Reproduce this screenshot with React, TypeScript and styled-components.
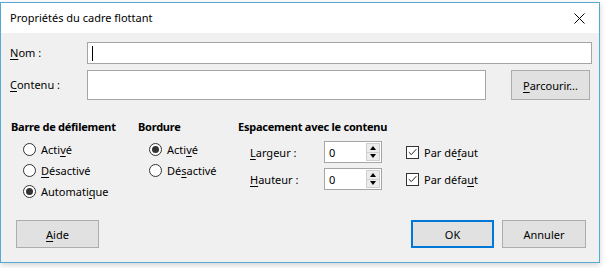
import React from "react";
import styled, { createGlobalStyle } from "styled-components";

const GlobalStyle = createGlobalStyle`
  html, body { margin: 0; padding: 0; background: #ffffff; }
  body {
    font-family: "Noto Sans", "Open Sans", sans-serif;
    font-size: 11px;
    color: #000;
  }
  * { box-sizing: border-box; }
`;

const Page = styled.div`
  padding-top: 2px;
  width: 610px;
  height: 268px;
`;

const Window = styled.div`
  width: 600px;
  height: 261px;
  border: 1px solid #55a9d2;
  display: flex;
  flex-direction: column;
  background: #f0f0f0;
  box-shadow: 0 2px 6px rgba(0, 0, 0, 0.18);
`;

const TitleBar = styled.div`
  height: 30px;
  flex: none;
  background: #ffffff;
  display: flex;
  align-items: center;
  justify-content: space-between;
  padding: 0 9px 0 9px;
`;

const Title = styled.span`
  font-size: 11px;
  line-height: 16px;
`;

const CloseIcon = styled.svg`
  width: 11px;
  height: 11px;
  margin-right: 5px;
  display: block;
`;

const Body = styled.div`
  flex: 1;
  display: flex;
  flex-direction: column;
  padding: 9px 7px 14px 9px;
`;

const FieldRow = styled.div<{ $h: number; $mt?: number }>`
  display: flex;
  align-items: center;
  height: ${(p) => p.$h}px;
  margin-top: ${(p) => p.$mt ?? 0}px;
`;

const FieldLabel = styled.label`
  width: 77px;
  flex: none;
  line-height: 16px;
`;

const TextBox = styled.div<{ $w?: number }>`
  height: 100%;
  width: ${(p) => (p.$w ? `${p.$w}px` : "auto")};
  flex: ${(p) => (p.$w ? "none" : "1")};
  background: #fff;
  border: 1px solid #a5a5a5;
  display: flex;
  align-items: center;
  padding-left: 4px;
`;

const Caret = styled.span`
  width: 1px;
  height: 15px;
  background: #000;
`;

const Mn = styled.span`
  text-decoration: underline;
  text-underline-offset: 2px;
`;

const Button = styled.button<{ $w: number; $h: number; $default?: boolean }>`
  width: ${(p) => p.$w}px;
  height: ${(p) => p.$h}px;
  flex: none;
  font-family: inherit;
  font-size: 11px;
  color: #000;
  background: #e1e1e1;
  border: ${(p) => (p.$default ? "2px solid #0078d7" : "1px solid #adadad")};
  padding: 0;
  margin: 0;
  display: flex;
  align-items: center;
  justify-content: center;
`;

const Groups = styled.div`
  display: flex;
  margin-top: 19px;
  padding-left: 1px;
`;

const Group = styled.div<{ $w: number }>`
  width: ${(p) => p.$w}px;
  flex: none;
  display: flex;
  flex-direction: column;
`;

const GroupTitle = styled.div`
  font-weight: 700;
  letter-spacing: -0.25px;
  line-height: 16px;
  height: 16px;
`;

const RadioList = styled.div<{ $indent: number }>`
  display: flex;
  flex-direction: column;
  padding-left: ${(p) => p.$indent}px;
  margin-top: 4px;
`;

const RadioRow = styled.div`
  display: flex;
  align-items: center;
  height: 21px;
  gap: 5px;
`;

const RadioCircle = styled.span<{ $on?: boolean }>`
  width: 13px;
  height: 13px;
  border-radius: 50%;
  border: 1px solid #333;
  background: #fff;
  display: flex;
  align-items: center;
  justify-content: center;
  &::after {
    content: "";
    width: 7px;
    height: 7px;
    border-radius: 50%;
    background: ${(p) => (p.$on ? "#333" : "transparent")};
  }
`;

const SpacingRows = styled.div`
  display: flex;
  flex-direction: column;
  gap: 5px;
  margin-top: 6px;
  padding-left: 12px;
`;

const SpacingRow = styled.div`
  display: flex;
  align-items: center;
  height: 22px;
`;

const SpacingLabel = styled.span`
  width: 74px;
  flex: none;
`;

const SpinBox = styled.div`
  width: 58px;
  height: 22px;
  flex: none;
  background: #fff;
  border: 1px solid #a5a5a5;
  display: flex;
  align-items: stretch;
  padding: 1px 1px 1px 4px;
`;

const SpinValue = styled.span`
  flex: 1;
  display: flex;
  align-items: center;
`;

const SpinButtons = styled.div`
  width: 14px;
  display: flex;
  flex-direction: column;
  border: 1px solid #cfcfcf;
  background: #ececec;
`;

const SpinBtn = styled.div<{ $down?: boolean }>`
  flex: 1;
  display: flex;
  align-items: center;
  justify-content: center;
  border-top: ${(p) => (p.$down ? "1px solid #cfcfcf" : "none")};
  &::after {
    content: "";
    width: 0;
    height: 0;
    border-left: 3px solid transparent;
    border-right: 3px solid transparent;
    ${(p) =>
      p.$down ? "border-top: 4px solid #000;" : "border-bottom: 4px solid #000;"}
  }
`;

const CheckRow = styled.div`
  display: flex;
  align-items: center;
  gap: 5px;
  margin-left: 24px;
`;

const CheckBox = styled.span`
  width: 13px;
  height: 13px;
  border: 1px solid #333;
  background: #fff;
  display: flex;
  align-items: center;
  justify-content: center;
`;

const ButtonBar = styled.div`
  margin-top: auto;
  display: flex;
  align-items: center;
  padding-left: 6px;
  padding-right: 6px;
  gap: 8px;
`;

const Spacer = styled.div`
  flex: 1;
`;

const Radio = ({ on, children }: { on?: boolean; children: React.ReactNode }) => (
  <RadioRow>
    <RadioCircle $on={on} />
    <span>{children}</span>
  </RadioRow>
);

const Check = () => (
  <CheckBox>
    <svg width="9" height="8" viewBox="0 0 9 8">
      <path d="M0.8 4.2 L3.3 6.6 L8.3 1.2" fill="none" stroke="#222" strokeWidth="1" />
    </svg>
  </CheckBox>
);

const Spin = () => (
  <SpinBox>
    <SpinValue>0</SpinValue>
    <SpinButtons>
      <SpinBtn />
      <SpinBtn $down />
    </SpinButtons>
  </SpinBox>
);

export default function App() {
  return (
    <Page>
      <GlobalStyle />
      <Window>
        <TitleBar>
          <Title>Propriétés du cadre flottant</Title>
          <CloseIcon viewBox="0 0 11 11">
            <path d="M0.5 0.5 L10.5 10.5 M10.5 0.5 L0.5 10.5" stroke="#000" strokeWidth="1" fill="none" />
          </CloseIcon>
        </TitleBar>
        <Body>
          <FieldRow $h={22}>
            <FieldLabel>
              <Mn>N</Mn>om :
            </FieldLabel>
            <TextBox>
              <Caret />
            </TextBox>
          </FieldRow>
          <FieldRow $h={30} $mt={6}>
            <FieldLabel>
              <Mn>C</Mn>ontenu :
            </FieldLabel>
            <TextBox $w={399} />
            <Spacer />
            <Button $w={79} $h={30} style={{ marginRight: 2 }}>
              <span>
                <Mn>P</Mn>arcourir...
              </span>
            </Button>
          </FieldRow>
          <Groups>
            <Group $w={127}>
              <GroupTitle>Barre de défilement</GroupTitle>
              <RadioList $indent={12}>
                <Radio>
                  Acti<Mn>v</Mn>é
                </Radio>
                <Radio>
                  <Mn>D</Mn>ésactivé
                </Radio>
                <Radio on>
                  Automati<Mn>q</Mn>ue
                </Radio>
              </RadioList>
            </Group>
            <Group $w={100}>
              <GroupTitle>Bordure</GroupTitle>
              <RadioList $indent={11}>
                <Radio on>
                  Acti<Mn>v</Mn>é
                </Radio>
                <Radio>
                  Dé<Mn>s</Mn>activé
                </Radio>
              </RadioList>
            </Group>
            <Group $w={300}>
              <GroupTitle>Espacement avec le contenu</GroupTitle>
              <SpacingRows>
                <SpacingRow>
                  <SpacingLabel>
                    <Mn>L</Mn>argeur :
                  </SpacingLabel>
                  <Spin />
                  <CheckRow>
                    <Check />
                    <span>
                      Par dé<Mn>f</Mn>aut
                    </span>
                  </CheckRow>
                </SpacingRow>
                <SpacingRow>
                  <SpacingLabel>
                    <Mn>H</Mn>auteur :
                  </SpacingLabel>
                  <Spin />
                  <CheckRow>
                    <Check />
                    <span>
                      Par défa<Mn>u</Mn>t
                    </span>
                  </CheckRow>
                </SpacingRow>
              </SpacingRows>
            </Group>
          </Groups>
          <ButtonBar>
            <Button $w={83} $h={28}>
              <span>
                <Mn>A</Mn>ide
              </span>
            </Button>
            <Spacer />
            <Button $w={83} $h={28} $default>
              OK
            </Button>
            <Button $w={84} $h={28}>
              Annuler
            </Button>
          </ButtonBar>
        </Body>
      </Window>
    </Page>
  );
}
